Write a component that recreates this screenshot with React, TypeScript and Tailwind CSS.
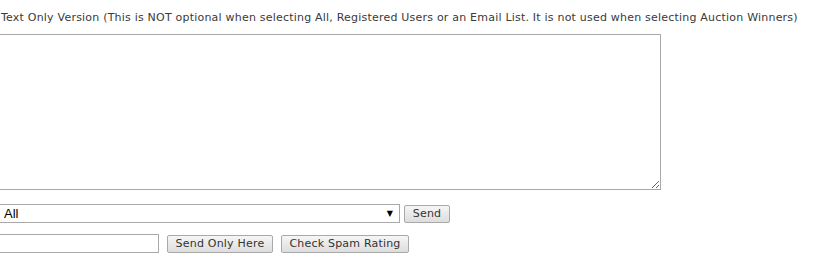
export default function App() {
  const btn =
    'h-[18px] px-[6px] border border-[#a9a9a9] rounded-[2px] bg-gradient-to-b from-[#f6f6f6] to-[#dddddd] text-[11px] leading-none text-[#333] tracking-[0.2px] font-["DejaVu_Sans",Verdana,sans-serif]'
  return (
    <div className="w-[835px] h-[262px] bg-white overflow-hidden font-['DejaVu_Sans',Verdana,sans-serif] text-[#3a3a3a]">
      <p className="pt-[11px] pl-px text-[11px] leading-[14px] tracking-[0.21px] whitespace-nowrap">
        Text Only Version (This is NOT optional when selecting All, Registered Users or an Email List. It is not used when selecting Auction Winners)
      </p>
      <div className="-ml-[2px]">
        <textarea className="block mt-[9px] w-[663px] h-[156px] border border-[#a9a9a9] bg-white resize" />
        <div className="flex items-center mt-[14px] gap-[4px]">
          <div className="relative w-[402px] h-[19px] border border-[#a9a9a9] bg-white">
            <span className="absolute left-[5px] top-0 text-[13px] leading-[17px] text-black font-['Liberation_Sans',Arial,sans-serif]">All</span>
            <span className="absolute right-[6px] top-[4px] text-[8px] leading-[9px] text-black">▼</span>
          </div>
          <button className={`${btn} w-[46px]`}>Send</button>
        </div>
        <div className="flex items-center mt-[11px]">
          <input className="w-[161px] h-[19px] border border-[#a9a9a9] bg-white" />
          <button className={`${btn} ml-[8px] w-[106px]`}>Send Only Here</button>
          <button className={`${btn} ml-[8px] w-[128px]`}>Check Spam Rating</button>
        </div>
      </div>
    </div>
  )
}
